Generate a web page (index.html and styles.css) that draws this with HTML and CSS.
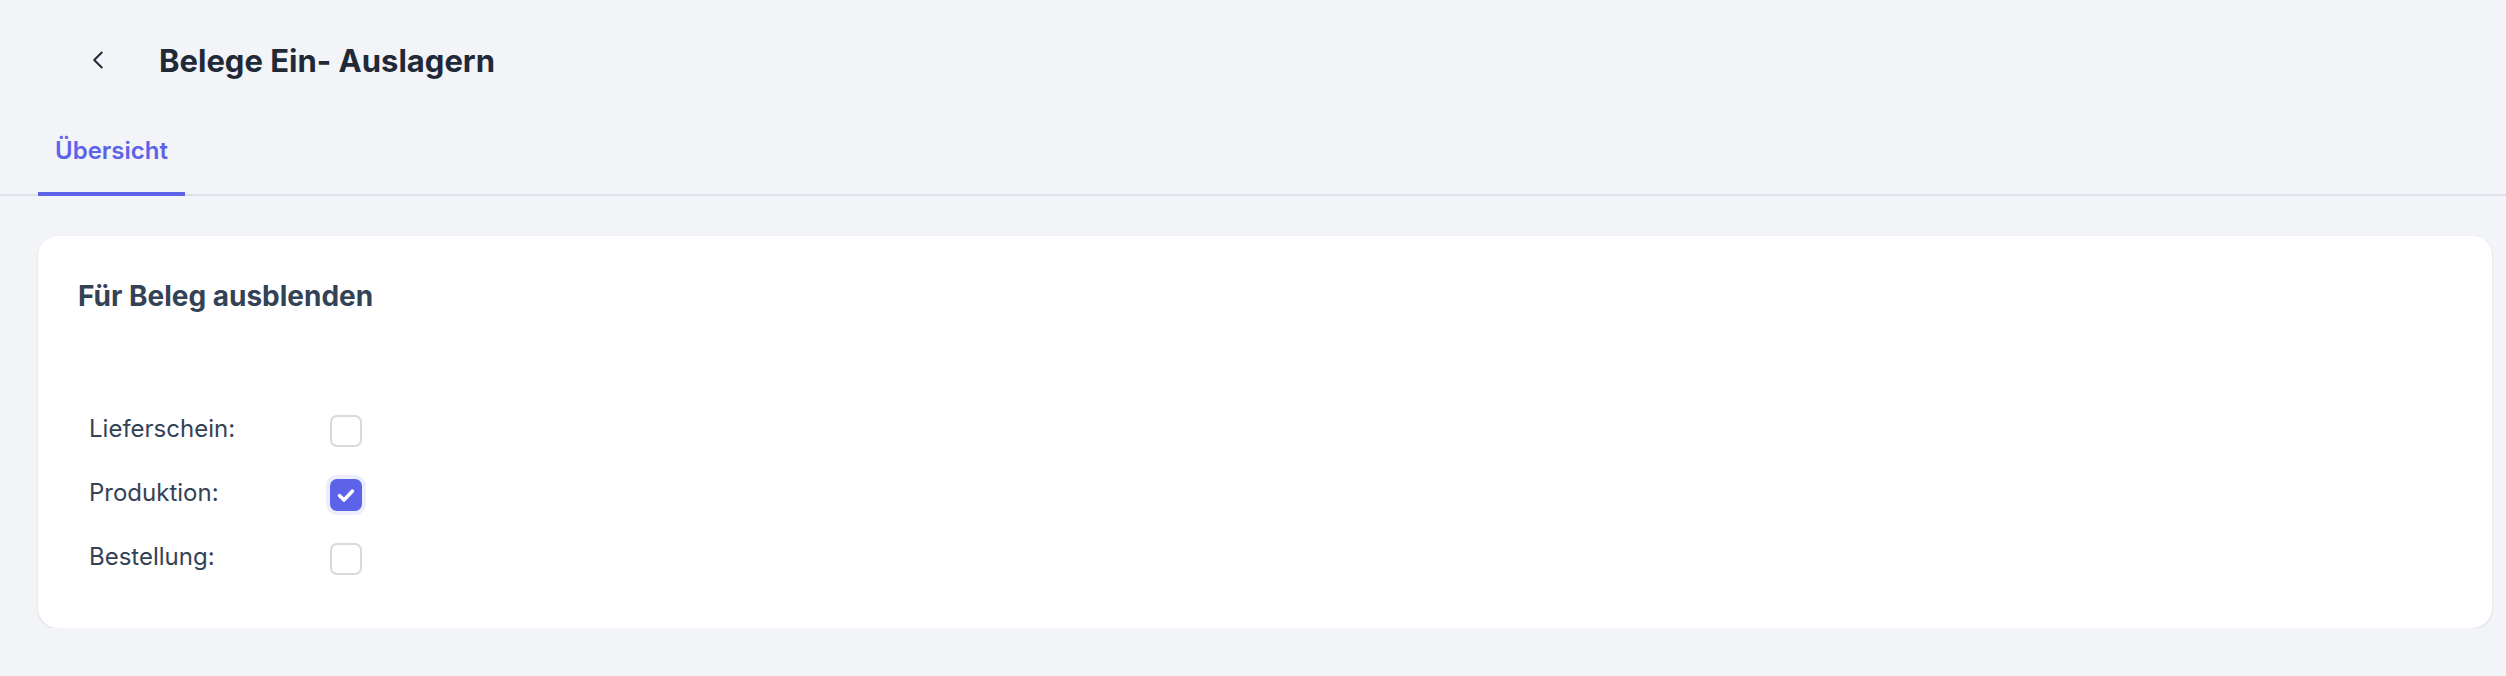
FILE: index.html
```html
<!DOCTYPE html>
<html lang="de">

<head>
    <meta charset="UTF-8">
    <meta name="viewport" content="width=device-width, initial-scale=1.0">
    <title>Belege Ein- Auslagern</title>

    <link rel="stylesheet" href="styles.css">
</head>

<body>
    <header class="page-header">
        <a class="back" href="#" aria-label="Zurück">
            <svg viewBox="0 0 24 24" width="24" height="24" fill="none" stroke="currentColor" stroke-width="2"
                stroke-linecap="round" stroke-linejoin="round">
                <path d="M15.75 19.5L8.25 12l7.5-7.5" />
            </svg>
        </a>
        <h1>Belege Ein- Auslagern</h1>
    </header>

    <nav class="tabs">
        <a class="tab active" href="#">Übersicht</a>
    </nav>

    <section class="card">
        <h2>Für Beleg ausblenden</h2>

        <div class="options">
            <div class="option">
                <span class="option-label">Lieferschein:</span>
                <span class="box"></span>
            </div>
            <div class="option">
                <span class="option-label">Produktion:</span>
                <span class="box checked">
                    <svg viewBox="0 0 32 32" width="32" height="32" fill="none" stroke="#fff" stroke-width="3.5"
                        stroke-linecap="round" stroke-linejoin="round">
                        <path d="M9.5 16.5L14 21l8.5-9" />
                    </svg>
                </span>
            </div>
            <div class="option">
                <span class="option-label">Bestellung:</span>
                <span class="box"></span>
            </div>
        </div>
    </section>
</body>

</html>
```

FILE: styles.css
```css
body {
    font-family: Inter, "Noto Sans", Arial, sans-serif;
    background-color: #f3f4f8;
    margin: 0;
    padding: 0;
}

.page-header {
    display: flex;
    align-items: center;
    height: 120px;
    padding-left: 86px;
}

.back {
    display: flex;
    color: #1f2937;
    margin-right: 49px;
}

h1 {
    margin: 0;
    font-size: 31px;
    font-weight: 700;
    color: #1f2937;
}

.tabs {
    display: flex;
    padding-left: 38px;
    border-bottom: 2px solid #dce2eb;
}

.tab {
    padding: 15px 17px 25px;
    margin-bottom: -2px;
    border-bottom: 4px solid transparent;
    font-size: 24px;
    line-height: 32px;
    font-weight: 600;
    color: #6b7280;
    text-decoration: none;
}

.tab.active {
    color: #5d63e8;
    border-bottom-color: #5d63e8;
}

.card {
    margin: 40px 14px 0 38px;
    padding: 42px 40px 53px;
    background-color: #fff;
    border-radius: 20px;
    box-shadow: 0 1px 3px rgba(0, 0, 0, 0.08), 0 1px 2px rgba(0, 0, 0, 0.04);
}

h2 {
    margin: 0;
    font-size: 28px;
    line-height: 36px;
    font-weight: 700;
    color: #344256;
}

.options {
    display: flex;
    flex-direction: column;
    gap: 32px;
    margin-top: 101px;
    padding-left: 11px;
}

.option {
    display: flex;
    align-items: center;
    height: 32px;
}

.option-label {
    width: 241px;
    padding-bottom: 4px;
    font-size: 24px;
    line-height: 32px;
    color: #344256;
}

.box {
    display: flex;
    box-sizing: border-box;
    width: 32px;
    height: 32px;
    border: 2px solid #d9d9de;
    border-radius: 7px;
}

.box.checked {
    border: none;
    background-color: #5d63e8;
    box-shadow: 0 0 0 4px #eceefd;
}
```
